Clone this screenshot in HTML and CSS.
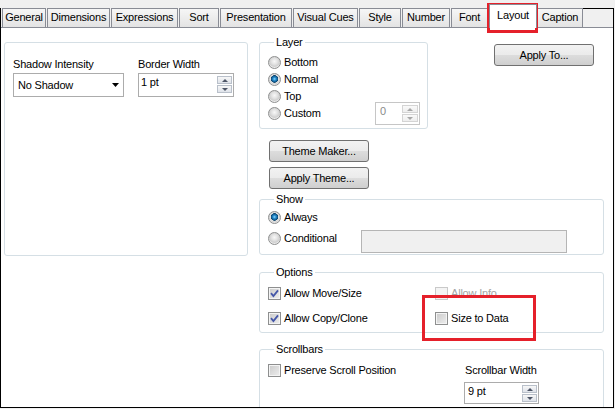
FILE: index.html
```html
<!DOCTYPE html>
<html>

<head>
    <title>Properties - Layout</title>
    <link rel="stylesheet" href="styles.css">
</head>

<body>
    <!-- window with the tab strip -->
    <div class="window">
        <div class="tabs">
            <div class="tab tab-general">General</div>
            <div class="tab tab-dimensions">Dimensions</div>
            <div class="tab tab-expressions">Expressions</div>
            <div class="tab tab-sort">Sort</div>
            <div class="tab tab-presentation">Presentation</div>
            <div class="tab tab-visual">Visual Cues</div>
            <div class="tab tab-style">Style</div>
            <div class="tab tab-number">Number</div>
            <div class="tab tab-font">Font</div>
            <div class="tab tab-layout active">Layout</div>
            <div class="tab tab-caption">Caption</div>
            <div class="tabs-rest"></div>
        </div>

        <div class="panel">
            <!-- left column -->
            <fieldset class="group left-group">
                <div class="field-row">
                    <div class="field field-shadow">
                        <div class="field-label">Shadow Intensity</div>
                        <div class="combo">
                            <span>No Shadow</span>
                            <svg class="combo-arrow" width="7" height="4" viewBox="0 0 7 4"><path d="M0 0h7L3.5 4z" fill="#000"/></svg>
                        </div>
                    </div>
                    <div class="field">
                        <div class="field-label">Border Width</div>
                        <div class="spin spin-border">
                            <span class="spin-text">1 pt</span>
                            <div class="spin-btns">
                                <div class="spin-btn up"></div>
                                <div class="spin-btn down"></div>
                            </div>
                        </div>
                    </div>
                </div>
            </fieldset>

            <!-- right column -->
            <div class="right-col">
                <div class="layer-row">
                    <fieldset class="group layer-group">
                        <legend>Layer</legend>
                        <div class="radio-item"><span class="radio"></span>Bottom</div>
                        <div class="radio-item"><span class="radio on"></span>Normal</div>
                        <div class="radio-item"><span class="radio"></span>Top</div>
                        <div class="custom-row">
                            <div class="radio-item"><span class="radio"></span>Custom</div>
                            <div class="spin spin-custom disabled">
                                <span class="spin-text">0</span>
                                <div class="spin-btns">
                                    <div class="spin-btn up"></div>
                                    <div class="spin-btn down"></div>
                                </div>
                            </div>
                        </div>
                    </fieldset>
                    <button class="btn btn-apply-to">Apply To...</button>
                </div>

                <button class="btn btn-theme-maker">Theme Maker...</button>
                <button class="btn btn-apply-theme">Apply Theme...</button>

                <fieldset class="group show-group">
                    <legend>Show</legend>
                    <div class="radio-item"><span class="radio on"></span>Always</div>
                    <div class="cond-row">
                        <div class="radio-item"><span class="radio"></span>Conditional</div>
                        <div class="textbox disabled"></div>
                    </div>
                </fieldset>

                <fieldset class="group options-group">
                    <legend>Options</legend>
                    <div class="options-grid">
                        <div class="check-item">
                            <span class="check"><svg width="11" height="11" viewBox="0 0 11 11"><path d="M2 5.2 4.4 8 9 2.4" fill="none" stroke="#4456a8" stroke-width="1.8"/></svg></span>Allow Move/Size
                        </div>
                        <div class="check-item disabled"><span class="check"></span>Allow Info</div>
                        <div class="check-item">
                            <span class="check"><svg width="11" height="11" viewBox="0 0 11 11"><path d="M2 5.2 4.4 8 9 2.4" fill="none" stroke="#4456a8" stroke-width="1.8"/></svg></span>Allow Copy/Clone
                        </div>
                        <div class="check-item"><span class="check"></span>Size to Data</div>
                    </div>
                </fieldset>

                <fieldset class="group scroll-group">
                    <legend>Scrollbars</legend>
                    <div class="scroll-grid">
                        <div class="check-item"><span class="check"></span>Preserve Scroll Position</div>
                        <div class="field">
                            <div class="field-label">Scrollbar Width</div>
                            <div class="spin spin-scroll">
                                <span class="spin-text">9 pt</span>
                                <div class="spin-btns">
                                    <div class="spin-btn up"></div>
                                    <div class="spin-btn down"></div>
                                </div>
                            </div>
                        </div>
                    </div>
                </fieldset>
            </div>
        </div>
    </div>

    <!-- red highlight frames drawn over the dialog -->
    <div class="mark mark-layout"></div>
    <div class="mark mark-size"></div>
</body>

</html>
```

FILE: styles.css
```css
body {
    margin: 0;
    width: 615px;
    height: 409px;
    overflow: hidden;
    position: relative;
    background-color: #f0f0f0;
    font-family: "Liberation Sans", Arial, sans-serif;
    font-size: 11px;
    line-height: 13px;
    letter-spacing: -0.2px;
    color: #000;
}

/* window frame */
.window {
    margin-top: 8px;
    width: 614px;
    height: 400px;
    box-sizing: border-box;
    border: 1px solid #000;
    border-top: none;
    display: flex;
    flex-direction: column;
}

/* tab strip */
.tabs {
    display: flex;
    align-items: flex-end;
    height: 19px;
    padding-left: 1px;
    flex: none;
}

.tab {
    flex: none;
    height: 19px;
    box-sizing: border-box;
    border: 1px solid #898c95;
    border-bottom: none;
    background: linear-gradient(#f6f6f6, #e3e3e3);
    margin-right: 1px;
    text-align: center;
    line-height: 17px;
    white-space: nowrap;
}

.tab-general { width: 44px; }
.tab-dimensions { width: 63px; }
.tab-expressions { width: 67px; }
.tab-sort { width: 40px; }
.tab-presentation { width: 72px; }
.tab-visual { width: 65px; }
.tab-style { width: 42px; }
.tab-number { width: 48px; }
.tab-font { width: 37px; }
.tab-layout { width: 48px; }
.tab-caption { width: 46px; }

.tab.active {
    height: 24px;
    margin: 0 0 -1px 0;
    padding-top: 4px;
    line-height: 13px;
    background: #fff;
    position: relative;
    z-index: 1;
}

.tabs-rest {
    flex: 1;
    align-self: stretch;
    border-top: 1px solid #000;
    margin-left: -1px;
}

/* white page under the tabs */
.panel {
    flex: 1;
    min-height: 0;
    background-color: #fff;
    border-top: 1px solid #898c95;
    display: flex;
    align-items: flex-start;
    gap: 11px;
    padding: 8px 0 0 3px;
    overflow: hidden;
}

/* group boxes */
.group {
    margin: 0;
    padding: 0;
    min-width: 0;
    box-sizing: border-box;
    border: 1px solid #d5dfe5;
    border-radius: 3px;
}

.group legend {
    padding: 0 2px;
    margin-left: 6px;
    line-height: 13px;
}

.left-group {
    width: 244px;
    height: 214px;
    margin-top: 6px;
    padding: 15px 0 0 8px;
}

.field-row {
    display: flex;
    gap: 14px;
}

.field-shadow {
    width: 111px;
}

.field-label {
    margin-bottom: 2px;
    white-space: nowrap;
}

.combo {
    width: 111px;
    height: 24px;
    box-sizing: border-box;
    border: 1px solid #acacac;
    display: flex;
    align-items: center;
    justify-content: space-between;
    padding: 0 4px;
}

/* spin boxes */
.spin {
    display: flex;
    align-items: flex-start;
    box-sizing: border-box;
    border: 1px solid #acacac;
    padding: 1px;
    background: #fff;
}

.spin-text {
    flex: 1;
    padding: 1px 0 0 1px;
}

.spin-border { width: 96px; height: 24px; }
.spin-custom { width: 45px; height: 23px; }
.spin-custom .spin-text { padding-left: 3px; }
.spin-scroll { width: 75px; height: 22px; }
.spin-scroll .spin-text { padding-left: 2px; }

.spin-btns {
    display: flex;
    flex-direction: column;
    gap: 1px;
    margin-top: 1px;
}

.spin-btn {
    width: 15px;
    height: 8px;
    box-sizing: border-box;
    border: 1px solid #b9c0ca;
    background: linear-gradient(#f7f7f7, #dfe3ea);
    display: flex;
    align-items: center;
    justify-content: center;
}

.spin-custom .spin-btn { width: 16px; }

.spin-btn::after {
    content: "";
    border-left: 3px solid transparent;
    border-right: 3px solid transparent;
}

.spin-btn.up::after { border-bottom: 3px solid #4d5566; }
.spin-btn.down::after { border-top: 3px solid #4d5566; }

.spin.disabled {
    border-color: #c6c6c6;
    color: #8a8a8a;
}

.spin.disabled .spin-btn {
    border-color: #d4d4d4;
    background: linear-gradient(#fafafa, #eeeeee);
}

.spin.disabled .spin-btn.up::after { border-bottom-color: #a7a7a7; }
.spin.disabled .spin-btn.down::after { border-top-color: #a7a7a7; }

/* right column */
.right-col {
    width: 345px;
    display: flex;
    flex-direction: column;
    align-items: flex-start;
}

.layer-row {
    align-self: stretch;
    display: flex;
    justify-content: space-between;
    align-items: flex-start;
}

.layer-group {
    width: 169px;
    padding: 5px 7px 6px 8px;
}

.custom-row {
    display: flex;
    justify-content: space-between;
    align-items: center;
    height: 17px;
}

/* radio buttons and check boxes */
.radio-item,
.check-item {
    display: flex;
    align-items: center;
    gap: 3px;
    height: 17px;
    white-space: nowrap;
}

.radio {
    flex: none;
    width: 13px;
    height: 13px;
    box-sizing: border-box;
    border-radius: 50%;
    border: 1px solid #8e8f8f;
    background: radial-gradient(circle at 50% 40%, #f8f8f8 0, #e2e2e2 3px, #cfcfcf 5px, #ececec 6px);
}

.radio.on {
    background: radial-gradient(circle at 50% 45%, #8fdcff 0, #2a8fd0 1.5px, #0f5a8f 3px, #0a3f66 3.5px, #e4e4e4 4px, #d4d4d4 5px, #ededed 6px);
}

.check {
    flex: none;
    width: 13px;
    height: 13px;
    box-sizing: border-box;
    border: 1px solid #8e8f8f;
    background: linear-gradient(135deg, #cacaca, #eeeeee);
    box-shadow: inset 0 0 0 1px #f4f4f4;
    display: flex;
    align-items: center;
    justify-content: center;
}

.check-item.disabled {
    color: #a3a3a3;
}

.check-item.disabled .check {
    border-color: #c9c9c9;
    background: #f4f4f4;
}

/* push buttons */
.btn {
    width: 100px;
    height: 22px;
    box-sizing: border-box;
    padding: 0;
    border: 1px solid #707070;
    border-radius: 3px;
    background: linear-gradient(#f2f2f2 0%, #ebebeb 50%, #dddddd 50%, #cfcfcf 100%);
    font: inherit;
    letter-spacing: inherit;
    color: #000;
}

.btn-apply-to {
    margin: 8px 10px 0 0;
}

.btn-theme-maker {
    margin: 11px 0 0 10px;
}

.btn-apply-theme {
    margin: 5px 0 0 10px;
}

.show-group {
    align-self: stretch;
    margin-top: 4px;
    padding: 3px 0 1px 8px;
}

.cond-row {
    display: flex;
    align-items: flex-start;
    margin-top: 4px;
}

.cond-row .radio-item {
    width: 93px;
}

.textbox {
    width: 206px;
    height: 23px;
    box-sizing: border-box;
    border: 1px solid #b5b5b5;
}

.textbox.disabled {
    background-color: #f0f0f0;
}

.options-group {
    align-self: stretch;
    margin-top: 11px;
    padding: 6px 0 5px 8px;
}

.options-grid {
    display: grid;
    grid-template-columns: 167px auto;
    row-gap: 8px;
}

.scroll-group {
    align-self: stretch;
    margin-top: 10px;
    padding: 6px 0 20px 8px;
}

.scroll-grid {
    display: grid;
    grid-template-columns: 196px auto;
}

.scroll-grid .field-label {
    padding-left: 1px;
    height: 17px;
    line-height: 17px;
    margin-bottom: 3px;
}

/* red highlight frames */
.mark {
    position: absolute;
    box-sizing: border-box;
    border: 3px solid #e5202a;
}

.mark-layout {
    left: 487px;
    top: 3px;
    width: 51px;
    height: 30px;
}

.mark-size {
    left: 422px;
    top: 295px;
    width: 114px;
    height: 46px;
}
```
